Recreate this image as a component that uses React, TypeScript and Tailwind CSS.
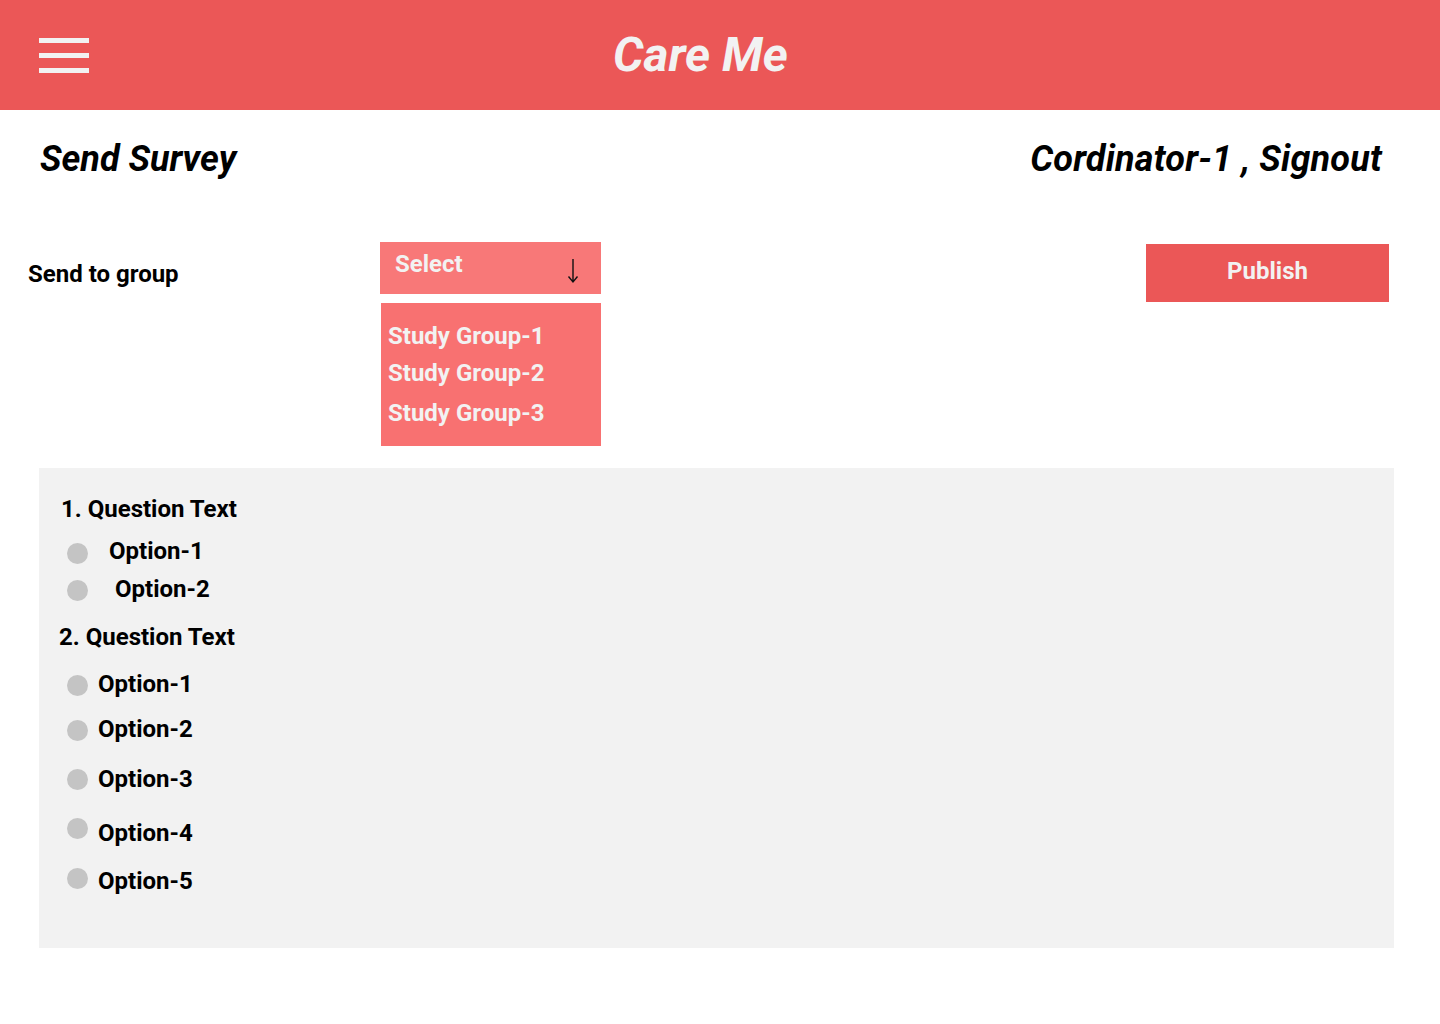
const font = { fontFamily: "Roboto, 'Liberation Sans', sans-serif" };

type Opt = { label: string; mt: number; dot: number; gap: number };

const q1: Opt[] = [
  { label: "Option-1", mt: 18, dot: 4, gap: 21 },
  { label: "Option-2", mt: 13, dot: 3, gap: 27 },
];

const q2: Opt[] = [
  { label: "Option-1", mt: 23, dot: 3, gap: 10 },
  { label: "Option-2", mt: 21, dot: 3, gap: 10 },
  { label: "Option-3", mt: 26, dot: 2, gap: 10 },
  { label: "Option-4", mt: 30, dot: -3, gap: 10 },
  { label: "Option-5", mt: 24, dot: -1, gap: 10 },
];

function Option({ opt }: { opt: Opt }) {
  return (
    <div className="flex items-start pl-[8px]" style={{ marginTop: opt.mt }}>
      <span
        className="block h-[21px] w-[21px] shrink-0 rounded-full bg-[#c4c4c4]"
        style={{ marginTop: opt.dot, marginRight: opt.gap }}
      />
      <span className="text-[24px] font-bold leading-none text-black">{opt.label}</span>
    </div>
  );
}

export default function App() {
  return (
    <div className="min-h-[1024px] w-[1440px] bg-white" style={font}>
      <header className="flex h-[110px] items-center bg-[#eb5757]">
        <div className="ml-[39px] flex w-[50px] flex-col gap-[10px]">
          <span className="block h-[5px] bg-[#f2f2f2]" />
          <span className="block h-[5px] bg-[#f2f2f2]" />
          <span className="block h-[5px] bg-[#f2f2f2]" />
        </div>
        <h1 className="ml-[524px] text-[48px] font-bold italic leading-none text-[#f2f2f2]">Care Me</h1>
      </header>

      <div className="mt-[31px] flex justify-between pl-[40px] pr-[58px]">
        <h2 className="text-[36px] font-bold italic leading-none text-black">Send Survey</h2>
        <p className="text-[36px] font-bold italic leading-none tracking-[0.2px] text-black">Cordinator-1 , Signout</p>
      </div>

      <div className="mt-[65px] flex items-start">
        <label className="ml-[28px] mt-[20px] w-[352px] text-[24px] font-bold leading-none text-black">
          Send to group
        </label>
        <div className="w-[221px]">
          <div className="flex h-[52px] items-start justify-between bg-[#f87878] pl-[15px] pr-[22px]">
            <span className="mt-[10px] text-[24px] font-bold leading-none text-[#f2f2f2]">Select</span>
            <svg width="12" height="26" viewBox="0 0 12 26" className="mt-[16px]">
              <path d="M6 1 V24 M1.5 18.5 L6 24 L10.5 18.5" fill="none" stroke="#111" strokeWidth="1.4" />
            </svg>
          </div>
          <ul className="ml-[1px] mt-[9px] h-[143px] w-[220px] bg-[#f87171] pl-[7px] pt-[21px] text-[24px] font-bold leading-none text-[#f2f2f2]">
            <li>Study Group-1</li>
            <li className="mt-[13px]">Study Group-2</li>
            <li className="mt-[16px]">Study Group-3</li>
          </ul>
        </div>
        <button className="ml-auto mr-[51px] mt-[2px] flex h-[58px] w-[243px] items-center justify-center bg-[#eb5757] pb-[4px] text-[24px] font-bold leading-none text-[#f2f2f2]">
          Publish
        </button>
      </div>

      <section className="ml-[39px] mt-[22px] h-[480px] w-[1355px] bg-[#f2f2f2] pl-[20px] pt-[29px]">
        <h3 className="ml-[2px] text-[24px] font-bold leading-none text-black">1. Question Text</h3>
        {q1.map((o) => (
          <Option key={"a" + o.label} opt={o} />
        ))}
        <h3 className="mt-[24px] text-[24px] font-bold leading-none text-black">2. Question Text</h3>
        {q2.map((o) => (
          <Option key={"b" + o.label} opt={o} />
        ))}
      </section>
    </div>
  );
}
